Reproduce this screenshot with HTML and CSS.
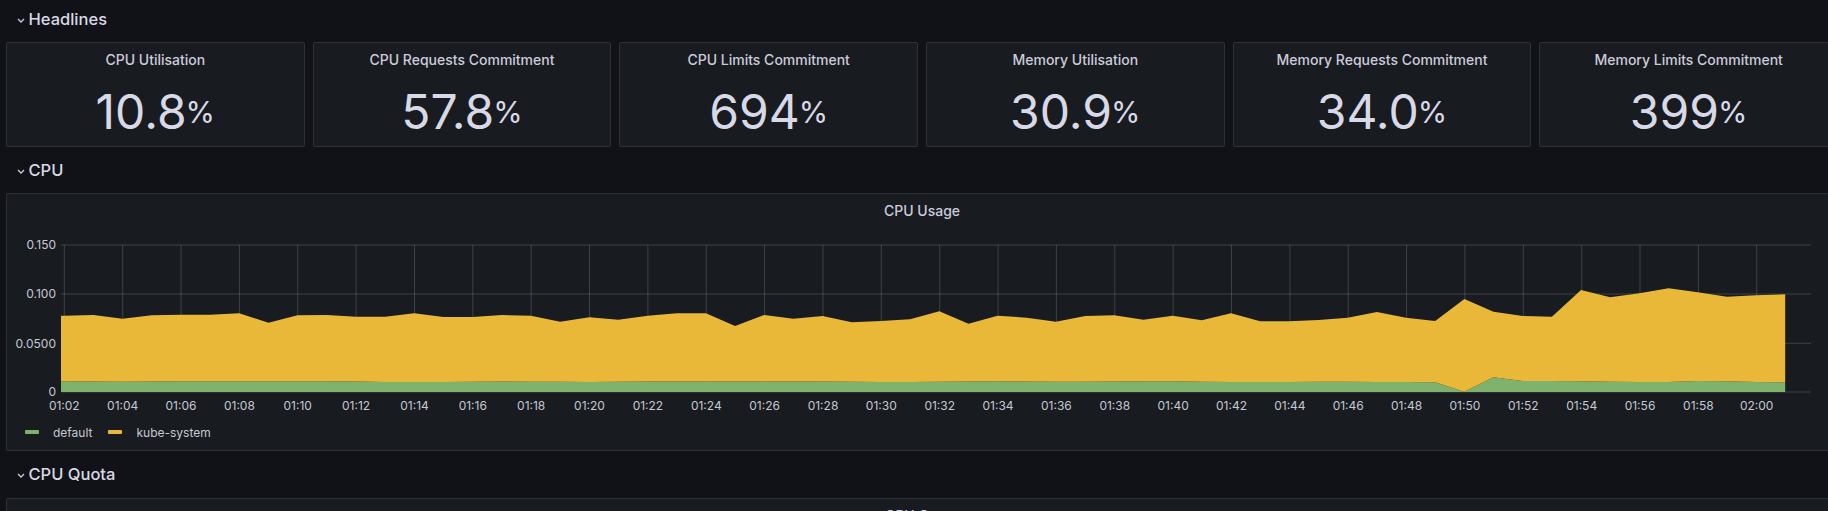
FILE: index.html
```html
<!DOCTYPE html>
<html>
<head>
<meta charset="utf-8">
<link rel="stylesheet" href="styles.css">
</head>
<body>
<div class="dash">
  <div class="row-head">
    <svg class="chev" width="8" height="5" viewBox="0 0 8 5"><path d="M1 1 L4 4 L7 1" /></svg>
    <span>Headlines</span>
  </div>
  <div class="stats">
    <div class="panel stat"><div class="ptitle">CPU Utilisation</div><div class="sval">10.8<span class="unit">%</span></div></div>
    <div class="panel stat"><div class="ptitle">CPU Requests Commitment</div><div class="sval">57.8<span class="unit">%</span></div></div>
    <div class="panel stat"><div class="ptitle">CPU Limits Commitment</div><div class="sval">694<span class="unit">%</span></div></div>
    <div class="panel stat"><div class="ptitle">Memory Utilisation</div><div class="sval">30.9<span class="unit">%</span></div></div>
    <div class="panel stat"><div class="ptitle">Memory Requests Commitment</div><div class="sval">34.0<span class="unit">%</span></div></div>
    <div class="panel stat"><div class="ptitle">Memory Limits Commitment</div><div class="sval">399<span class="unit">%</span></div></div>
  </div>
  <div class="row-head">
    <svg class="chev" width="8" height="5" viewBox="0 0 8 5"><path d="M1 1 L4 4 L7 1" /></svg>
    <span>CPU</span>
  </div>
  <div class="panel chart">
    <div class="ptitle">CPU Usage</div>
    <svg class="plot" width="1830" height="193" viewBox="7 227 1830 193">
      <g class="grid">
        <line x1="61" y1="245" x2="1811" y2="245"/>
        <line x1="61" y1="294" x2="1811" y2="294"/>
        <line x1="61" y1="343.3" x2="1811" y2="343.3"/>
        <line x1="61" y1="392" x2="1811" y2="392"/>
        <line x1="64.3" y1="245" x2="64.3" y2="392"/>
        <line x1="122.7" y1="245" x2="122.7" y2="392"/>
        <line x1="181" y1="245" x2="181" y2="392"/>
        <line x1="239.4" y1="245" x2="239.4" y2="392"/>
        <line x1="297.7" y1="245" x2="297.7" y2="392"/>
        <line x1="356.1" y1="245" x2="356.1" y2="392"/>
        <line x1="414.5" y1="245" x2="414.5" y2="392"/>
        <line x1="472.8" y1="245" x2="472.8" y2="392"/>
        <line x1="531.2" y1="245" x2="531.2" y2="392"/>
        <line x1="589.5" y1="245" x2="589.5" y2="392"/>
        <line x1="647.9" y1="245" x2="647.9" y2="392"/>
        <line x1="706.3" y1="245" x2="706.3" y2="392"/>
        <line x1="764.6" y1="245" x2="764.6" y2="392"/>
        <line x1="823" y1="245" x2="823" y2="392"/>
        <line x1="881.3" y1="245" x2="881.3" y2="392"/>
        <line x1="939.7" y1="245" x2="939.7" y2="392"/>
        <line x1="998.1" y1="245" x2="998.1" y2="392"/>
        <line x1="1056.4" y1="245" x2="1056.4" y2="392"/>
        <line x1="1114.8" y1="245" x2="1114.8" y2="392"/>
        <line x1="1173.1" y1="245" x2="1173.1" y2="392"/>
        <line x1="1231.5" y1="245" x2="1231.5" y2="392"/>
        <line x1="1289.9" y1="245" x2="1289.9" y2="392"/>
        <line x1="1348.2" y1="245" x2="1348.2" y2="392"/>
        <line x1="1406.6" y1="245" x2="1406.6" y2="392"/>
        <line x1="1464.9" y1="245" x2="1464.9" y2="392"/>
        <line x1="1523.3" y1="245" x2="1523.3" y2="392"/>
        <line x1="1581.7" y1="245" x2="1581.7" y2="392"/>
        <line x1="1640" y1="245" x2="1640" y2="392"/>
        <line x1="1698.4" y1="245" x2="1698.4" y2="392"/>
        <line x1="1756.7" y1="245" x2="1756.7" y2="392"/>
      </g>
      <polygon class="s-green" points="61,392 61,381.3 64.2,381.3 93.4,381.5 122.5,381.8 151.7,381.5 180.9,381.3 210.1,381.3 239.2,381.2 268.4,381.2 297.6,381.2 326.7,381.3 355.9,381.5 385.1,382 414.2,382 443.4,382 472.6,381.7 501.8,381.5 530.9,381.8 560.1,381.8 589.3,382 618.4,381.7 647.6,381.5 676.8,381.5 705.9,381.5 735.1,381.5 764.3,381.5 793.4,381.5 822.6,381.5 851.8,381.8 880.9,382 910.1,382 939.3,381.8 968.5,381.5 997.6,381.3 1026.8,381.5 1056,381.8 1085.2,381.8 1114.3,381.5 1143.5,381.2 1172.7,381.3 1201.8,381.7 1231,382 1260.2,382 1289.3,382 1318.5,381.8 1347.7,381.8 1376.9,382 1406,382 1435.2,382.2 1464.4,391.8 1493.5,377.3 1522.7,381 1551.9,381 1581,381.3 1610.2,381.8 1639.4,382 1668.6,382 1697.7,381 1726.9,381.3 1756.1,382 1785.2,382.2 1785.2,392"/>
      <polygon class="s-yellow" points="61,381.3 61,315.7 64.2,315.7 93.4,315 122.5,318.7 151.7,315.3 180.9,314.7 210.1,314.7 239.2,313.3 268.4,322.7 297.6,315.3 326.7,315 355.9,316.7 385.1,316.7 414.2,313.3 443.4,317 472.6,317 501.8,315 530.9,315.7 560.1,321.7 589.3,317.3 618.4,319.7 647.6,315.7 676.8,313.3 705.9,313.3 735.1,326 764.3,315 793.4,318.7 822.6,316 851.8,322.3 880.9,321 910.1,319.3 939.3,311.3 968.5,323.7 997.6,315.7 1026.8,317.7 1056,321.7 1085.2,316 1114.3,315.3 1143.5,319.7 1172.7,315.7 1201.8,320.3 1231,313.3 1260.2,321.3 1289.3,321.3 1318.5,320 1347.7,317.7 1376.9,312 1406,317.7 1435.2,321 1464.4,299 1493.5,311.7 1522.7,316 1551.9,316.7 1581,290 1610.2,297.3 1639.4,293.3 1668.6,288.3 1697.7,292.3 1726.9,296.7 1756.1,295.3 1785.2,294.3 1785.2,382.2 1756.1,382 1726.9,381.3 1697.7,381 1668.6,382 1639.4,382 1610.2,381.8 1581,381.3 1551.9,381 1522.7,381 1493.5,377.3 1464.4,391.8 1435.2,382.2 1406,382 1376.9,382 1347.7,381.8 1318.5,381.8 1289.3,382 1260.2,382 1231,382 1201.8,381.7 1172.7,381.3 1143.5,381.2 1114.3,381.5 1085.2,381.8 1056,381.8 1026.8,381.5 997.6,381.3 968.5,381.5 939.3,381.8 910.1,382 880.9,382 851.8,381.8 822.6,381.5 793.4,381.5 764.3,381.5 735.1,381.5 705.9,381.5 676.8,381.5 647.6,381.5 618.4,381.7 589.3,382 560.1,381.8 530.9,381.8 501.8,381.5 472.6,381.7 443.4,382 414.2,382 385.1,382 355.9,381.5 326.7,381.3 297.6,381.2 268.4,381.2 239.2,381.2 210.1,381.3 180.9,381.3 151.7,381.5 122.5,381.8 93.4,381.5 64.2,381.3"/>
      <g class="ylab">
        <text x="56" y="249.3">0.150</text>
        <text x="56" y="298.3">0.100</text>
        <text x="56" y="347.6">0.0500</text>
        <text x="56" y="396.3">0</text>
      </g>
      <g class="xlab">
        <text x="64.3" y="410.4">01:02</text>
        <text x="122.7" y="410.4">01:04</text>
        <text x="181" y="410.4">01:06</text>
        <text x="239.4" y="410.4">01:08</text>
        <text x="297.7" y="410.4">01:10</text>
        <text x="356.1" y="410.4">01:12</text>
        <text x="414.5" y="410.4">01:14</text>
        <text x="472.8" y="410.4">01:16</text>
        <text x="531.2" y="410.4">01:18</text>
        <text x="589.5" y="410.4">01:20</text>
        <text x="647.9" y="410.4">01:22</text>
        <text x="706.3" y="410.4">01:24</text>
        <text x="764.6" y="410.4">01:26</text>
        <text x="823" y="410.4">01:28</text>
        <text x="881.3" y="410.4">01:30</text>
        <text x="939.7" y="410.4">01:32</text>
        <text x="998.1" y="410.4">01:34</text>
        <text x="1056.4" y="410.4">01:36</text>
        <text x="1114.8" y="410.4">01:38</text>
        <text x="1173.1" y="410.4">01:40</text>
        <text x="1231.5" y="410.4">01:42</text>
        <text x="1289.9" y="410.4">01:44</text>
        <text x="1348.2" y="410.4">01:46</text>
        <text x="1406.6" y="410.4">01:48</text>
        <text x="1464.9" y="410.4">01:50</text>
        <text x="1523.3" y="410.4">01:52</text>
        <text x="1581.7" y="410.4">01:54</text>
        <text x="1640" y="410.4">01:56</text>
        <text x="1698.4" y="410.4">01:58</text>
        <text x="1756.7" y="410.4">02:00</text>
      </g>
    </svg>
    <div class="legend">
      <div class="litem"><span class="dash-icon green"></span><span>default</span></div>
      <div class="litem"><span class="dash-icon yellow"></span><span>kube-system</span></div>
    </div>
  </div>
  <div class="row-head">
    <svg class="chev" width="8" height="5" viewBox="0 0 8 5"><path d="M1 1 L4 4 L7 1" /></svg>
    <span>CPU Quota</span>
  </div>
  <div class="panel quota">
    <div class="ptitle">CPU Quota</div>
  </div>
</div>
</body>
</html>
```
FILE: styles.css
```css
html, body {
  margin: 0;
  padding: 0;
  overflow: hidden;
  background: #111217;
}
body {
  width: 1828px;
  height: 511px;
  font-family: Inter, "Noto Sans", "Liberation Sans", sans-serif;
  color: #ccccdc;
}
.dash {
  width: 1832px;
  margin-left: 6px;
  padding-top: 4px;
  display: flex;
  flex-direction: column;
  gap: 8px;
}
.row-head {
  height: 30px;
  display: flex;
  align-items: center;
  padding-left: 10.5px;
  font-size: 16.5px;
  font-weight: 500;
  color: #d8d9e3;
}
.chev {
  margin-right: 4px;
  margin-top: 3px;
}
.chev path {
  fill: none;
  stroke: #ccccdc;
  stroke-width: 1.3;
}
.panel {
  background: #181b1f;
  border: 1px solid rgba(204, 204, 220, 0.12);
  border-radius: 2px;
  box-sizing: border-box;
}
.ptitle {
  height: 33px;
  line-height: 33px;
  text-align: center;
  font-size: 14px;
  font-weight: 500;
  color: #ccccdc;
  white-space: nowrap;
}
.stats {
  display: grid;
  grid-template-columns: repeat(6, 1fr);
  gap: 8px;
}
.stat {
  height: 105px;
  display: flex;
  flex-direction: column;
}
.sval {
  flex: 1;
  display: flex;
  align-items: center;
  justify-content: center;
  padding-top: 2px;
  font-size: 48px;
  line-height: 1;
  font-weight: 400;
  color: #d8d9e6;
}
.sval .unit {
  font-size: 30px;
  margin-left: -1px;
}
.chart {
  height: 258px;
  display: flex;
  flex-direction: column;
}
.plot {
  display: block;
  flex: none;
}
.grid line {
  stroke: rgba(255, 255, 255, 0.17);
  stroke-width: 1;
}
.s-green { fill: #7eb26d; }
.s-yellow { fill: #eab839; }
.ylab text, .xlab text {
  font-family: Inter, "Noto Sans", sans-serif;
  font-size: 12px;
  fill: #c7c8d2;
}
.ylab text { text-anchor: end; }
.xlab text { text-anchor: middle; }
.legend {
  height: 24px;
  display: flex;
  align-items: center;
  gap: 16px;
  padding-left: 18px;
  font-size: 12px;
  color: #c7c8d2;
}
.litem {
  display: flex;
  align-items: center;
}
.dash-icon {
  width: 14px;
  height: 4px;
  border-radius: 1px;
  margin-right: 14px;
}
.dash-icon.green { background: #7eb26d; }
.dash-icon.yellow { background: #eab839; }
.quota {
  height: 200px;
  margin-top: 1px;
}
```
